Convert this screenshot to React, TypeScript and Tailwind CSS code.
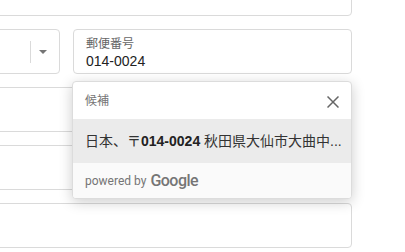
import { useState } from 'react';

const Field = ({ children, className = '' }: { children?: React.ReactNode; className?: string }) => (
  <div className={`h-[45px] rounded-[4px] border border-[#dadada] bg-white ${className}`}>{children}</div>
);

const App = () => {
  const [zip] = useState('014-0024');

  return (
    <div
      className="relative h-[252px] w-[405px] overflow-hidden bg-white"
      style={{ fontFamily: '"Liberation Sans", "Noto Sans CJK JP", sans-serif' }}
    >
      {/* form column, partly scrolled out of view */}
      <div className="-mt-[29px] -ml-[50px] flex w-[402px] flex-col gap-[13px]">
        <Field />
        <div className="flex gap-[13px]">
          <Field className="flex w-[110px] shrink-0 items-center justify-end">
            <div className="h-[22px] w-px bg-[#dadada]" />
            <div className="mr-[12px] ml-[8px] h-0 w-0 border-x-[4.5px] border-t-[4px] border-x-transparent border-t-[#757575]" />
          </Field>
          <Field className="flex-1 px-[12px] pt-[6px]">
            <div className="text-[12px] leading-[16px] text-[#666]">郵便番号</div>
            <div className="text-[14px] leading-[18px] text-[#222]">{zip}</div>
          </Field>
        </div>
        <Field />
        <Field />
        <Field />
      </div>

      {/* suggestions dropdown */}
      <div className="absolute top-[81px] left-[72px] w-[280px] overflow-hidden rounded-[4px] border border-[#dcdcdc] bg-white shadow-[0_3px_14px_rgba(0,0,0,0.2)]">
        <div className="flex h-[37px] items-center justify-between px-[12px]">
          <span className="text-[12px] text-[#757575]">候補</span>
          <svg width="12" height="12" viewBox="0 0 12 12" className="mt-[2px]">
            <path d="M0.5 0.5 L11.5 11.5 M11.5 0.5 L0.5 11.5" stroke="#666" strokeWidth="1.5" />
          </svg>
        </div>
        <div className="flex h-[44px] items-center bg-[#ebebeb] px-[12px]">
          <span className="text-[14px] whitespace-nowrap text-[#333]">
            日本、〒<b className="font-bold text-[#222]">014-0024</b> 秋田県大仙市大曲中...
          </span>
        </div>
        <div className="flex h-[35px] items-center gap-[4px] bg-[#fafafa] px-[12px]">
          <span className="text-[12px] text-[#757575]" style={{ fontFamily: 'Roboto, sans-serif' }}>
            powered by
          </span>
          <span
            className="text-[16px] leading-none font-medium tracking-[-0.5px] text-[#757575]"
            style={{ fontFamily: 'Roboto, sans-serif' }}
          >
            Google
          </span>
        </div>
      </div>
    </div>
  );
};

export default App;
